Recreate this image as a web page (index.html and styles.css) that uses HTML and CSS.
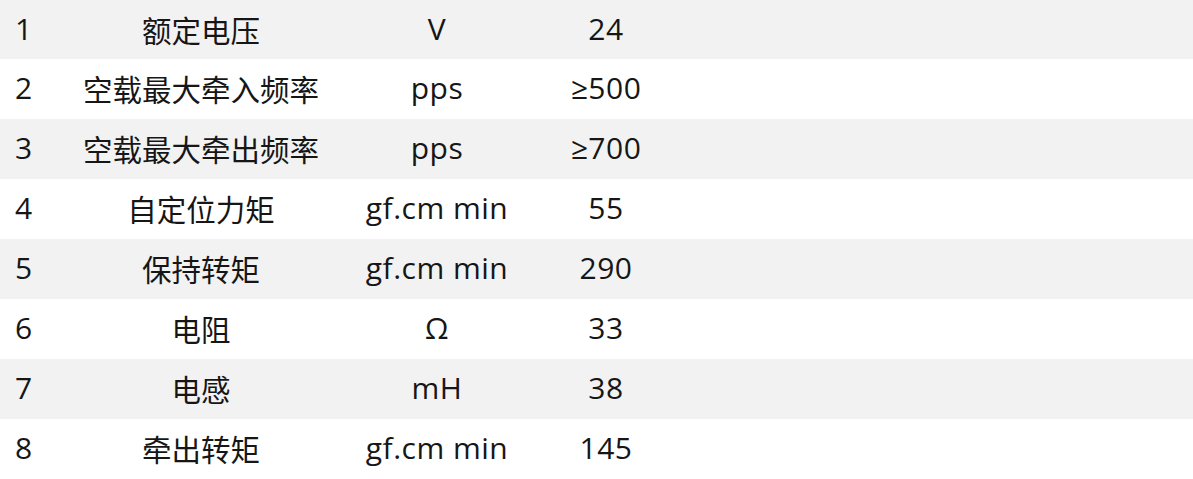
FILE: index.html
```html
<!DOCTYPE html>
<html lang="zh-CN">
<head>
<meta charset="utf-8">
<link rel="stylesheet" href="styles.css">
</head>
<body>
<div class="table">
  <div class="row shade"><div class="no">1</div><div class="c name">额定电压</div><div class="c unit">V</div><div class="c val">24</div></div>
  <div class="row"><div class="no">2</div><div class="c name">空载最大牵入频率</div><div class="c unit">pps</div><div class="c val">≥500</div></div>
  <div class="row shade"><div class="no">3</div><div class="c name">空载最大牵出频率</div><div class="c unit">pps</div><div class="c val">≥700</div></div>
  <div class="row"><div class="no">4</div><div class="c name">自定位力矩</div><div class="c unit">gf.cm min</div><div class="c val">55</div></div>
  <div class="row shade"><div class="no">5</div><div class="c name">保持转矩</div><div class="c unit">gf.cm min</div><div class="c val">290</div></div>
  <div class="row"><div class="no">6</div><div class="c name">电阻</div><div class="c unit">Ω</div><div class="c val">33</div></div>
  <div class="row shade"><div class="no">7</div><div class="c name">电感</div><div class="c unit">mH</div><div class="c val">38</div></div>
  <div class="row"><div class="no">8</div><div class="c name">牵出转矩</div><div class="c unit">gf.cm min</div><div class="c val">145</div></div>
</div>
</body>
</html>
```
FILE: styles.css
```css
html, body {
  margin: 0;
  padding: 0;
  background: #ffffff;
}
.table {
  display: flex;
  flex-direction: column;
  width: 1193px;
  font-family: "Open Sans", "Noto Sans CJK SC", sans-serif;
  font-size: 30px;
  letter-spacing: 0.5px;
  color: #161616;
}
.row {
  display: grid;
  grid-template-columns: 60px 282px 190px 148px 1fr;
  align-items: center;
  height: 60px;
}
.row:first-child {
  height: 59px;
}
.shade {
  background: #f2f2f2;
}
.no {
  padding-left: 15px;
  line-height: 1;
  margin-top: -2px;
}
.c {
  text-align: center;
  line-height: 1;
  white-space: nowrap;
  margin-top: -2px;
}
.name {
  font-family: "Noto Sans CJK SC", sans-serif;
  font-size: 29.5px;
  letter-spacing: 0;
  margin-top: 0;
}
```
